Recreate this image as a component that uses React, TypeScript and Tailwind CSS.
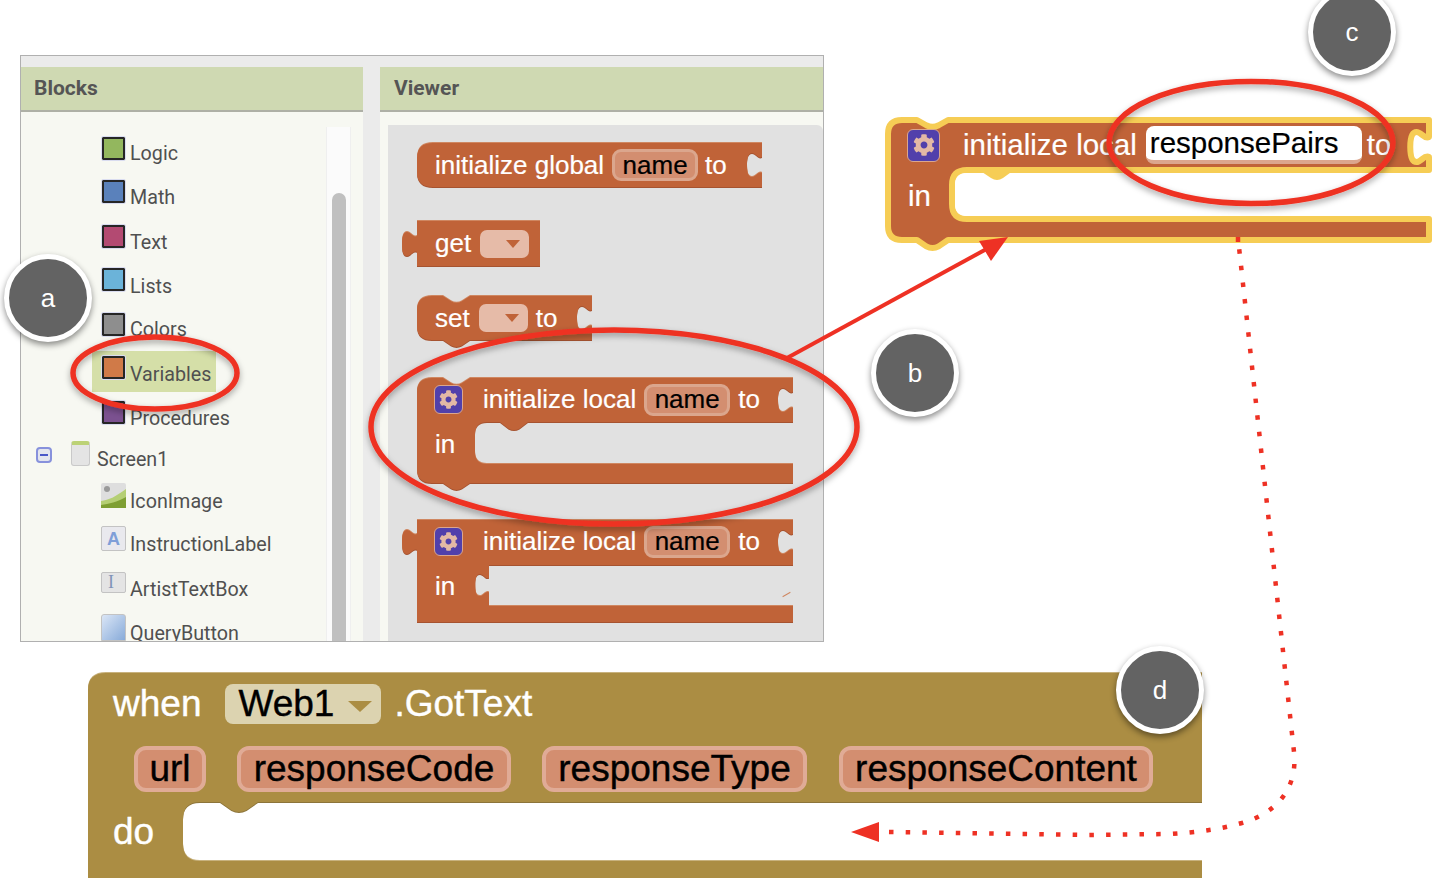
import { FaCog } from "react-icons/fa";

// puzzle connector helpers, s scales the 24px tall tab
const notchRight = (w: number, y: number, s = 1) =>
  `V${y + 4 * s} C${w - 4 * s} ${y + 6 * s} ${w - 6 * s} ${y} ${w - 10 * s} ${y} C${w - 14 * s} ${y} ${w - 15 * s} ${y + 5 * s} ${w - 15 * s} ${y + 12 * s} C${w - 15 * s} ${y + 19 * s} ${w - 14 * s} ${y + 24 * s} ${w - 10 * s} ${y + 24 * s} C${w - 6 * s} ${y + 24 * s} ${w - 4 * s} ${y + 18 * s} ${w} ${y + 20 * s}`;

const plugLeft = (l: number, y: number) =>
  `V${y + 20} C${l - 4} ${y + 18} ${l - 6} ${y + 24} ${l - 10} ${y + 24} C${l - 14} ${y + 24} ${l - 15} ${y + 19} ${l - 15} ${y + 12} C${l - 15} ${y + 5} ${l - 14} ${y} ${l - 10} ${y} C${l - 6} ${y} ${l - 4} ${y + 6} ${l} ${y + 4}`;

// dent when walking right along a top edge
const dent = (x: number, y: number, w = 27, d = 7) =>
  `H${x} L${x + w * 0.3} ${y + d * 0.75} Q${x + w * 0.5} ${y + d * 1.2} ${x + w * 0.7} ${y + d * 0.75} L${x + w} ${y}`;

// bump when walking left along a bottom edge
const bump = (x: number, y: number, w = 27, d = 7) =>
  `H${x + w} L${x + w * 0.7} ${y + d * 0.8} Q${x + w * 0.5} ${y + d * 1.2} ${x + w * 0.3} ${y + d * 0.8} L${x} ${y}`;

const BlockShape = ({ d, fill = "#c06338", light = "#cf8761", dark = "#a65330" }: { d: string; fill?: string; light?: string; dark?: string }) => (
  <svg className="absolute inset-0 w-full h-full overflow-visible">
    <path d={d} fill={dark} transform="translate(0 1)" />
    <path d={d} fill={light} transform="translate(0 -1)" />
    <path d={d} fill={fill} />
  </svg>
);

const NamePill = ({ text }: { text: string }) => (
  <span className="flex items-center justify-center w-[86px] h-[32px] rounded-[9px] border-[3px] border-[#dba68d] bg-[#d38e70] text-black text-[26px]">
    {text}
  </span>
);

const DropPill = ({ className = "" }: { className?: string }) => (
  <span className={`flex items-center justify-end pr-[9px] w-[49px] h-[28px] rounded-[7px] bg-[#e6bba8] ${className}`}>
    <span className="w-0 h-0 border-x-[7px] border-x-transparent border-t-[8px] border-t-[#c06338]" />
  </span>
);

const GearBox = () => (
  <span className="flex items-center justify-center w-[29px] h-[29px] rounded-[6px] border border-[#dba68d] bg-[#5140ab] text-[#e3b9a5]">
    <FaCog size={19} />
  </span>
);

const categories = [
  { label: "Logic", color: "bg-[#93b75e]", row: "h-[43px]", text: "mt-[5px]" },
  { label: "Math", color: "bg-[#5a81bb]", row: "h-[45px]", text: "mt-[6px]" },
  { label: "Text", color: "bg-[#b34a72]", row: "h-[43px]", text: "mt-[6px]" },
  { label: "Lists", color: "bg-[#6bb3d9]", row: "h-[45px]", text: "mt-[7px]" },
  { label: "Colors", color: "bg-[#8e8e8e]", row: "h-[43px]", text: "mt-[5px]" },
  { label: "Variables", color: "bg-[#d07a48]", row: "h-[45px]", text: "mt-[7px]" },
  { label: "Procedures", color: "bg-[#7b5190]", row: "h-[40px]", text: "mt-[6px]" },
];

const Swatch = ({ color }: { color: string }) => (
  <span className="block w-[23px] h-[23px] shrink-0 border-2 border-[#262626] outline outline-1 outline-[#d9dcf0] rounded-[1px]">
    <span className={`block w-full h-full ${color}`} />
  </span>
);

const ComponentIcon = ({ kind }: { kind: string }) => {
  if (kind === "image")
    return (
      <svg width="25" height="25" viewBox="0 0 25 25" className="shrink-0">
        <rect width="25" height="25" rx="2" fill="#dedede" />
        <circle cx="6" cy="6" r="3" fill="#9a9a9a" />
        <path d="M0 18 C8 17 14 14 25 6 V25 H0Z" fill="#b5cf74" />
        <path d="M0 22 C8 21 16 19 25 14 V25 H0Z" fill="#7e9f33" />
      </svg>
    );
  if (kind === "label")
    return (
      <span className="flex items-center justify-center w-[25px] h-[25px] shrink-0 rounded-[2px] border border-[#c3c3c3] bg-[#e9e9ee] text-[#7f9fd8] text-[18px] font-bold font-['Liberation_Sans',sans-serif]">
        A
      </span>
    );
  if (kind === "textbox")
    return (
      <span className="flex items-start justify-start pl-[6px] w-[25px] h-[21px] shrink-0 rounded-[2px] border border-[#c3c3c3] bg-[#e4e4e4] text-[#7f93b8] text-[18px] leading-[18px] font-['Liberation_Serif',serif]">
        I
      </span>
    );
  return <span className="block w-[25px] h-[27px] shrink-0 rounded-t-[3px] border border-[#c3c3c3] bg-gradient-to-br from-[#dbe6f6] to-[#88abd9]" />;
};

const components = [
  { label: "IconImage", kind: "image", row: "h-[43px]", text: "mt-[7px]" },
  { label: "InstructionLabel", kind: "label", row: "h-[46px]", text: "mt-[7px]" },
  { label: "ArtistTextBox", kind: "textbox", row: "h-[42px]", text: "mt-[6px]" },
  { label: "QueryButton", kind: "button", row: "h-[44px]", text: "mt-[8px]" },
];

const EventPill = ({ text, className }: { text: string; className: string }) => (
  <span className={`flex items-center justify-center h-[46px] rounded-[12px] border-[4px] border-[#e0ab96] bg-[#d38e70] text-black text-[37px] ${className}`}>
    {text}
  </span>
);

const Badge = ({ letter, className }: { letter: string; className: string }) => (
  <div className={`absolute z-20 flex items-center justify-center w-[88px] h-[88px] rounded-full border-[5px] border-white bg-[#636363] text-white text-[26px] shadow-[0_3px_6px_rgba(0,0,0,0.45)] font-['Liberation_Sans',sans-serif] ${className}`}>
    {letter}
  </div>
);

const initLocalPath = `M15 1 ${dent(26, 1)} H376 ${notchRight(376, 11)} V45 ${bump(83, 45, 28, 8)} H70 Q58 45 58 57 V75 Q58 87 70 87 H376 V106 H55 ${bump(26, 106)} H15 Q0 106 0 92 V15 Q0 1 15 1Z`;
const initPlugPath = `M0 1 H376 ${notchRight(376, 11)} V46 H72 ${notchRight(72, 55, 0.92)} V87 H376 V103 H0 ${plugLeft(0, 11)}Z`;

export default function App() {
  return (
    <div className="relative w-[1442px] h-[878px] overflow-hidden bg-white pt-[55px] pl-[20px] font-['Liberation_Sans',sans-serif]">
      {/* panel */}
      <div className="flex flex-col w-[804px] h-[587px] border border-[#b0b0b0] bg-[#ebebeb] overflow-hidden pt-[11px] font-['Roboto',sans-serif]">
        <div className="flex flex-1 min-h-0">
          {/* blocks column */}
          <div className="flex flex-col w-[342px] shrink-0">
            <div className="flex items-center h-[45px] pl-[13px] bg-[#cfd9b2] border-b-2 border-[#aeb0a6] text-[21px] font-bold text-[#555]">Blocks</div>
            <div className="relative flex-1 min-h-0 bg-[#f7f8f2] overflow-hidden text-[19.7px] leading-[24px] text-[#505050]">
              <div className="flex flex-col pt-[25px]">
                {categories.map((c) => (
                  <div key={c.label} className={`relative flex items-start pl-[81px] gap-[5px] ${c.row}`}>
                    {c.label === "Variables" && <span className="absolute left-[71px] -top-[5px] w-[124px] h-[41px] bg-[#d5dfa8]" />}
                    <span className="relative"><Swatch color={c.color} /></span>
                    <span className={`relative ${c.text}`}>{c.label}</span>
                  </div>
                ))}
                <div className="flex items-start h-[42px] pl-[15px]">
                  <span className="flex items-center justify-center w-[16px] h-[16px] mt-[6px] rounded-[4px] border-2 border-[#8791dc] bg-[#e3e5ee]">
                    <span className="block w-[8px] h-[2px] bg-[#4a58c8]" />
                  </span>
                  <span className="block w-[19px] h-[25px] ml-[19px] rounded-[3px] border border-[#c9c9c9] border-t-[4px] border-t-[#bcd276] bg-[#e4e4e4]" />
                  <span className="ml-[7px] mt-[7px]">Screen1</span>
                </div>
                {components.map((c) => (
                  <div key={c.label} className={`flex items-start pl-[80px] gap-[4px] ${c.row}`}>
                    <ComponentIcon kind={c.kind} />
                    <span className={c.text}>{c.label}</span>
                  </div>
                ))}
              </div>
              {/* tree scrollbar */}
              <div className="absolute top-[15px] bottom-0 left-[305px] w-[25px] border-x border-[#efefef] bg-[#fbfbfb] pt-[66px] flex justify-center">
                <div className="w-[14px] h-full rounded-t-[7px] bg-[#c0c0c0]" />
              </div>
            </div>
          </div>
          <div className="w-[17px] shrink-0 bg-[#ebebeb]" />
          {/* viewer column */}
          <div className="flex flex-col flex-1 min-w-0">
            <div className="flex items-center h-[45px] pl-[14px] bg-[#cfd9b2] border-b-2 border-[#aeb0a6] text-[21px] font-bold text-[#555]">Viewer</div>
            <div className="flex flex-1 min-h-0 bg-[#f7f8f2] pl-[8px] pt-[13px]">
              <div className="flex flex-col flex-1 items-start pl-[29px] pt-[17px] bg-[#e1e1e1] rounded-tr-[6px] text-white text-[26px] font-['Liberation_Sans',sans-serif] [-webkit-text-stroke:0.2px_currentColor]">
                {/* initialize global */}
                <div className="relative w-[345px] h-[46px]">
                  <BlockShape d={`M16 1 H345 ${notchRight(345, 11)} V45 H16 Q0 45 0 30 V16 Q0 1 16 1Z`} />
                  <div className="relative flex items-center h-full pl-[18px]">
                    <span>initialize global</span>
                    <span className="ml-[8px]"><NamePill text="name" /></span>
                    <span className="ml-[7px]">to</span>
                  </div>
                </div>
                {/* get */}
                <div className="relative w-[123px] h-[47px] mt-[32px]">
                  <BlockShape d={`M0 1 H123 V46 H0 ${plugLeft(0, 12)}Z`} />
                  <div className="relative flex items-center h-full pl-[18px]">
                    <span>get</span>
                    <DropPill className="ml-[9px]" />
                  </div>
                </div>
                {/* set */}
                <div className="relative w-[175px] h-[46px] mt-[28px]">
                  <BlockShape d={`M15 1 ${dent(26, 1)} H175 ${notchRight(175, 11)} V45 H53 ${bump(26, 45)} H15 Q0 45 0 31 V15 Q0 1 15 1Z`} />
                  <div className="relative flex items-center h-full pl-[18px]">
                    <span>set</span>
                    <DropPill className="ml-[9px]" />
                    <span className="ml-[8px]">to</span>
                  </div>
                </div>
                {/* initialize local, no plug */}
                <div className="relative w-[376px] h-[106px] mt-[36px]">
                  <BlockShape d={initLocalPath} />
                  <div className="relative flex flex-col">
                    <div className="flex items-center h-[45px] pl-[17px]">
                      <GearBox />
                      <span className="ml-[20px]">initialize local</span>
                      <span className="ml-[8px]"><NamePill text="name" /></span>
                      <span className="ml-[8px]">to</span>
                    </div>
                    <span className="pl-[18px] mt-[3px]">in</span>
                  </div>
                </div>
                {/* initialize local, plug on the left */}
                <div className="relative w-[376px] h-[103px] mt-[36px]">
                  <BlockShape d={initPlugPath} />
                  <div className="relative flex flex-col">
                    <div className="flex items-center h-[45px] pl-[17px]">
                      <GearBox />
                      <span className="ml-[20px]">initialize local</span>
                      <span className="ml-[8px]"><NamePill text="name" /></span>
                      <span className="ml-[8px]">to</span>
                    </div>
                    <span className="pl-[18px] mt-[3px]">in</span>
                  </div>
                  <span className="absolute left-[365px] top-[75px] w-[9px] h-[1px] -rotate-[30deg] bg-[#cf8761]" />
                </div>
              </div>
            </div>
          </div>
        </div>
      </div>

      {/* when block */}
      <div className="relative w-[1114px] h-[220px] ml-[68px] mt-[30px] text-white text-[37px] [-webkit-text-stroke:0.4px_currentColor]">
        <BlockShape
          fill="#ab8d43"
          light="#c8b27e"
          dark="#8c743a"
          d={`M18 1 H1114 V130 ${bump(132, 130, 38, 10)} H112 Q95 130 95 147 V172 Q95 189 112 189 H1114 V220 H0 V18 Q0 1 18 1Z`}
        />
        <div className="relative flex flex-col">
          <div className="flex items-center h-[64px] pl-[25px]">
            <span>when</span>
            <span className="flex items-center w-[156px] h-[40px] ml-[24px] pl-[13px] rounded-[8px] bg-[#dcd3b0] text-black">
              Web1
              <span className="ml-[14px] mt-[4px] w-0 h-0 border-x-[12px] border-x-transparent border-t-[11px] border-t-[#ab8d43]" />
            </span>
            <span className="ml-[13px]">.GotText</span>
          </div>
          <div className="flex items-center h-[46px] mt-[10px] pl-[46px]">
            <EventPill text="url" className="w-[72px]" />
            <EventPill text="responseCode" className="w-[274px] ml-[31px]" />
            <EventPill text="responseType" className="w-[265px] ml-[31px]" />
            <EventPill text="responseContent" className="w-[314px] ml-[32px]" />
          </div>
          <span className="pl-[25px] mt-[12px]">do</span>
        </div>
      </div>

      {/* highlighted block, free on the canvas */}
      <div className="absolute left-[885px] top-[117px] w-[547px] h-[135px] text-white text-[29.5px] [-webkit-text-stroke:0.2px_currentColor]">
        <svg className="absolute inset-0 w-full h-full overflow-visible">
          <path
            d={`M17 3 ${dent(32, 3, 31, 7)} H544 ${notchRight(544, 15, 1.25)} V53 H82 Q67 53 67 68 V87 Q67 102 82 102 H544 V123 H63 ${bump(32, 123, 31, 8)} H17 Q3 123 3 109 V17 Q3 3 17 3Z`}
            fill="#c06338"
            stroke="#f6cd55"
            strokeWidth="6"
            strokeLinejoin="round"
          />
          <path d="M82 56 H547 V99 H82 Q70 99 70 87 V68 Q70 56 82 56Z" fill="white" />
          <path d="M94 53 H129 L118 61 Q112 65 106 61Z" fill="#f6cd55" />
        </svg>
        <div className="relative flex flex-col">
          <div className="flex items-center h-[50px] pt-[6px] pl-[22px]">
            <span className="flex items-center justify-center w-[33px] h-[33px] rounded-[6px] border border-[#dba68d] bg-[#5140ab] text-[#e3b9a5]">
              <FaCog size={22} />
            </span>
            <span className="ml-[23px]">initialize local</span>
            <span className="flex items-center w-[216px] h-[38px] ml-[9px] pl-[4px] rounded-[8px] bg-white border-b-[4px] border-[#dba68d] text-black">responsePairs</span>
            <span className="ml-[5px]">to</span>
          </div>
          <span className="pl-[23px] mt-[7px]">in</span>
        </div>
      </div>

      {/* annotations */}
      <svg className="absolute inset-0 z-10 w-[1442px] h-[878px] pointer-events-none" fill="none">
        <defs>
          <filter id="soft" x="-20%" y="-20%" width="140%" height="140%">
            <feDropShadow dx="0" dy="3" stdDeviation="3" floodColor="#000" floodOpacity="0.35" />
          </filter>
        </defs>
        <g stroke="#ee3124" strokeWidth="5.5" filter="url(#soft)">
          <ellipse cx="155" cy="373" rx="82" ry="36" />
          <ellipse cx="614" cy="427" rx="243" ry="97" />
          <ellipse cx="1251" cy="142.5" rx="142" ry="61" />
        </g>
        <path d="M787 358 L992 246" stroke="#ee3124" strokeWidth="4" />
        <path d="M1008 237 L979 241 L991 261Z" fill="#ee3124" />
        <path
          d="M889 832 L1088 835 L1170 834 C1200 832 1220 829 1238 824 C1275 815 1298 790 1294 752 L1238 238"
          stroke="#ee3124"
          strokeWidth="4.5"
          strokeDasharray="4.5 12.2"
        />
        <path d="M1238 237 v5" stroke="#ee3124" strokeWidth="4.5" />
        <path d="M851 832 L879 822 V842Z" fill="#ee3124" />
      </svg>

      <Badge letter="a" className="left-[4px] top-[254px]" />
      <Badge letter="b" className="left-[871px] top-[329px]" />
      <Badge letter="c" className="left-[1308px] -top-[12px]" />
      <Badge letter="d" className="left-[1116px] top-[646px]" />
    </div>
  );
}
